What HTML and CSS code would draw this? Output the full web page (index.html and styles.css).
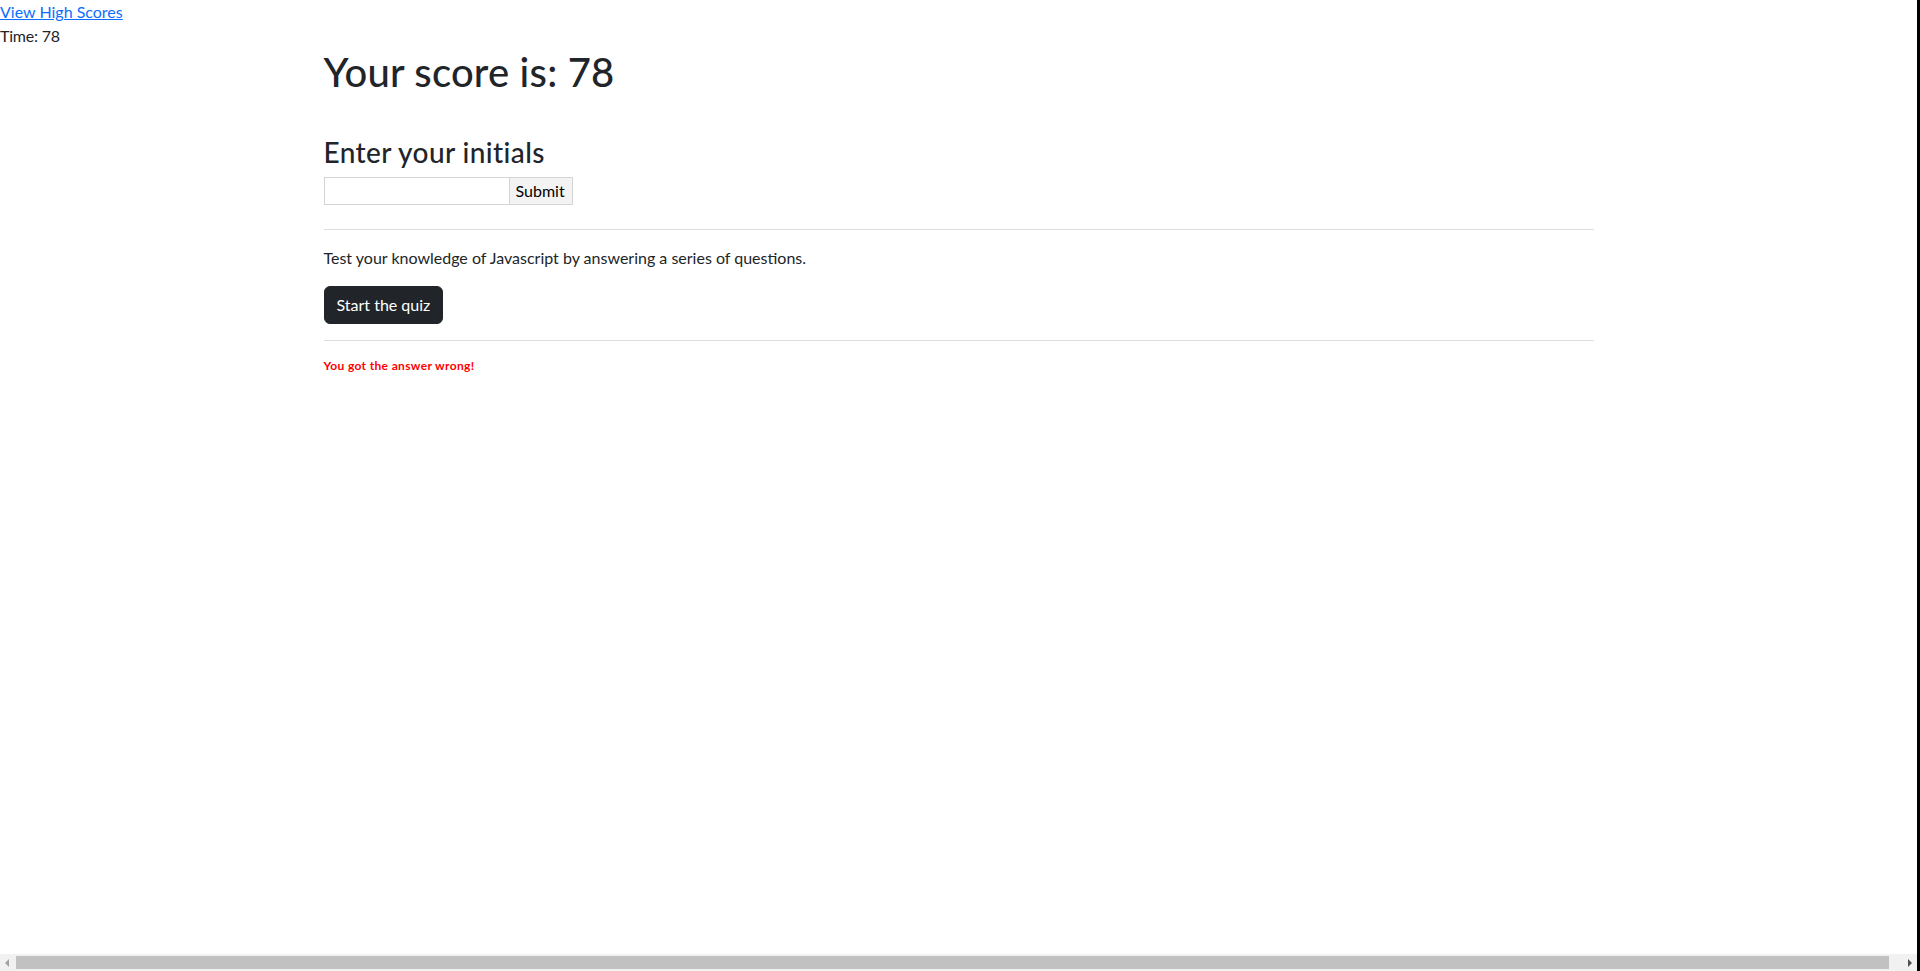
FILE: index.html
```html
<!DOCTYPE html>
<html lang="en">
<head>
<meta charset="utf-8">
<title>Code Quiz</title>
<link rel="stylesheet" href="styles.css">
</head>
<body>
<div class="window">
  <div class="viewport">
    <div class="page">
      <header class="topbar">
        <a href="#" class="scores-link">View High Scores</a>
        <div class="timer">Time: 78</div>
      </header>
      <main class="container">
        <h1 class="score">Your score is: 78</h1>
        <h3 class="initials-title">Enter your initials</h3>
        <form class="initials-form">
          <input type="text" class="initials-input"><button type="button" class="submit-btn">Submit</button>
        </form>
        <hr class="divider divider-top">
        <p class="intro">Test your knowledge of Javascript by answering a series of questions.</p>
        <button type="button" class="start-btn">Start the quiz</button>
        <hr class="divider divider-bottom">
        <p class="feedback">You got the answer wrong!</p>
      </main>
    </div>
    <div class="hscroll">
      <span class="sb-btn"><span class="sb-arrow sb-left"></span></span>
      <span class="sb-track"><span class="sb-thumb"></span></span>
      <span class="sb-btn"><span class="sb-arrow sb-right"></span></span>
    </div>
  </div>
  <div class="edge"></div>
</div>
</body>
</html>
```
FILE: styles.css
```css
* { box-sizing: border-box; }

html, body {
  margin: 0;
  padding: 0;
  height: 100%;
  overflow: hidden;
  background: #fff;
}

body {
  font-family: "Segoe UI", Lato, "Noto Sans", sans-serif;
  font-size: 16px;
  line-height: 24px;
  color: #212529;
}

.window {
  display: flex;
  height: 971px;
}

.viewport {
  flex: 1;
  display: flex;
  flex-direction: column;
  min-width: 0;
}

.page {
  flex: 1;
  overflow: hidden;
}

.edge {
  width: 3px;
  background: #000;
}

.topbar {
  display: flex;
  flex-direction: column;
  align-items: flex-start;
}

.scores-link {
  color: #0d6efd;
  text-decoration: underline;
}

.timer {
  letter-spacing: -0.2px;
}

.container {
  width: 1270px;
  margin: 0 auto;
}

.score {
  margin: 0 0 40px;
  font-size: 40px;
  line-height: 48px;
  font-weight: 500;
  letter-spacing: 0.2px;
}

.initials-title {
  margin: 0 0 7px;
  font-size: 28px;
  line-height: 1.2;
  font-weight: 500;
  letter-spacing: 0.4px;
}

.initials-form {
  display: flex;
  margin: 0;
}

.initials-input {
  width: 186px;
  height: 28px;
  padding: 1px 2px;
  border: 1px solid #d4d4d4;
  border-radius: 0;
  font: inherit;
  outline: none;
}

.submit-btn {
  height: 28px;
  padding: 1px 7px 1px 6px;
  border: 1px solid #d4d4d4;
  border-left: 0;
  border-radius: 0;
  background: #f3f3f3;
  color: #000;
  font: inherit;
  line-height: 24px;
}

.divider {
  height: 0;
  border: 0;
  border-top: 1px solid #dedede;
}

.divider-top { margin: 24px 0 16px; }
.divider-bottom { margin: 16px 0 16px; }

.intro {
  margin: 0 0 16px;
}

.start-btn {
  display: inline-block;
  padding: 6px 12px;
  border: 1px solid #212529;
  border-radius: 6px;
  background: #212529;
  color: #fff;
  font: inherit;
  line-height: 24px;
}

.feedback {
  margin: 0;
  font-size: 12px;
  line-height: 18px;
  font-weight: 700;
  letter-spacing: 0.35px;
  color: #ff0000;
}

.hscroll {
  display: flex;
  height: 17px;
  background: #f1f1f1;
}

.sb-btn {
  width: 16px;
  display: flex;
  align-items: center;
  justify-content: center;
}

.sb-track {
  flex: 1;
  padding-top: 1px;
}

.sb-thumb {
  display: block;
  width: calc(100% - 12px);
  height: 13px;
  margin-top: 1px;
  background: #c1c1c1;
}

.sb-arrow {
  width: 0;
  height: 0;
  border-top: 4px solid transparent;
  border-bottom: 4px solid transparent;
}

.sb-left { border-right: 4px solid #a3a3a3; margin-right: 2px; }
.sb-right { border-left: 4px solid #505050; margin-left: 2px; }
```
